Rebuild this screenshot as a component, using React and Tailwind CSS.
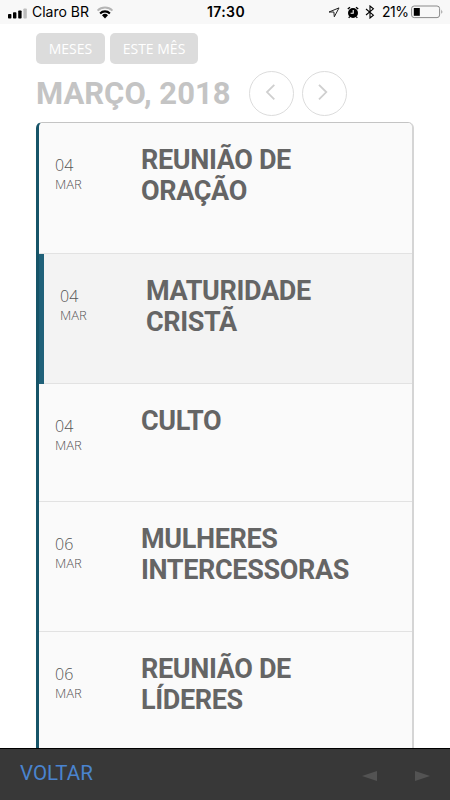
import React from 'react';

const events = [
  { day: '04', month: 'MAR', lines: ['REUNIÃO DE', 'ORAÇÃO'], height: 'h-[131px]' },
  { day: '04', month: 'MAR', lines: ['MATURIDADE', 'CRISTÃ'], height: 'h-[130px]', active: true },
  { day: '04', month: 'MAR', lines: ['CULTO'], height: 'h-[118px]' },
  { day: '06', month: 'MAR', lines: ['MULHERES', 'INTERCESSORAS'], height: 'h-[130px]' },
  { day: '06', month: 'MAR', lines: ['REUNIÃO DE', 'LÍDERES'], height: 'h-[131px]' },
];

function StatusBar() {
  return (
    <div className="h-6 shrink-0 bg-[#f8f8f8] pl-[8px] pr-[6px] grid grid-cols-[1fr_auto_1fr] items-center text-black font-['Inter',sans-serif] text-[14px] leading-6">
      <div className="flex items-center">
        <svg width="20" height="11" viewBox="0 0 20 11" className="mt-0.5">
          <rect x="0" y="6" width="3.4" height="4.5" rx="0.8" fill="#000" />
          <rect x="5" y="4.2" width="3.4" height="6.3" rx="0.8" fill="#000" />
          <rect x="10.2" y="2.4" width="3.4" height="8.1" rx="0.8" fill="#000" />
          <rect x="15.4" y="0.4" width="3.4" height="10.1" rx="0.8" fill="#bdbdbd" />
        </svg>
        <span className="ml-[4px] w-[58px] whitespace-nowrap">Claro BR</span>
        <svg width="18" height="13" viewBox="0 0 18 13" className="ml-[6px]" fill="none">
          <path d="M1.6 4.6a10.6 10.6 0 0 1 14.8 0" stroke="#b5b5b5" strokeWidth="2" />
          <path d="M4.1 7.4a7 7 0 0 1 9.8 0" stroke="#000" strokeWidth="2.1" />
          <path d="M6 9.3a4.3 4.3 0 0 1 6 0L9 12.4z" fill="#000" />
        </svg>
      </div>
      <span className="font-semibold tracking-[0.4px]">17:30</span>
      <div className="flex items-center justify-end">
        <svg width="12" height="11" viewBox="0 0 12 11" className="mr-[7px]" fill="none">
          <path d="M11 0.9L1 5h4.9L6.3 9.8z" stroke="#222" strokeWidth="1" strokeLinejoin="round" />
        </svg>
        <svg width="12" height="13" viewBox="0 0 12 13" className="mr-[6px]" fill="none">
          <path d="M0.8 3L3 1.2M11.2 3L9 1.2" stroke="#000" strokeWidth="1.4" />
          <circle cx="6" cy="7" r="5" fill="#000" />
          <path d="M6.2 4v3.2H3.6" stroke="#fff" strokeWidth="1.1" />
          <path d="M2.7 10.6l-1 1.3M9.3 10.6l1 1.3" stroke="#000" strokeWidth="1.2" />
        </svg>
        <svg width="10" height="14" viewBox="0 0 10 14" className="mr-[7px]" fill="none">
          <path d="M1 4l7.4 6.2L5 13V1l3.4 2.8L1 10" stroke="#000" strokeWidth="1.1" />
        </svg>
        <span className="w-[26px] whitespace-nowrap tracking-[-0.5px]">21%</span>
        <svg width="33" height="14" viewBox="0 0 33 14" className="ml-[3px]" fill="none">
          <rect x="0.6" y="1" width="28" height="11.6" rx="2.6" stroke="#8a8a8a" />
          <rect x="2.8" y="3" width="6" height="7.8" fill="#000" />
          <path d="M30.4 4.6q1.8 2.2 0 4.4z" fill="#8a8a8a" />
        </svg>
      </div>
    </div>
  );
}

function ArrowButton({ direction }) {
  return (
    <button className="w-[45px] h-[45px] rounded-full border border-[#dcdcdc] flex items-center justify-center">
      <svg width="45" height="45" viewBox="0 0 45 45" fill="none" stroke="#cfcfcf" strokeWidth="1.8" className="shrink-0">
        {direction === 'left' ? <path d="M25.3 13.8L18 21.1l7.3 7.3" /> : <path d="M17 13.8l7.3 7.3L17 28.4" />}
      </svg>
    </button>
  );
}

function EventRow({ event }) {
  return (
    <div className={`${event.height} shrink-0 flex border-b border-[#e2e2e2] ${event.active ? 'bg-[#f3f3f3]' : 'bg-[#fafafa]'}`}>
      {event.active && <div className="w-[5px] -mb-px bg-[#206179]" />}
      <div className="w-[86px] ml-4 pt-[32px] shrink-0 font-light text-[#555] font-['Open_Sans',sans-serif]">
        <div className="text-[16px] leading-5">{event.day}</div>
        <div className="text-[13px] leading-[18px]">{event.month}</div>
      </div>
      <div className="pt-[22px] font-bold text-[27px] tracking-[-0.35px] leading-[31px] text-[#656565] font-['Roboto',sans-serif] whitespace-nowrap">
        {event.lines.map(line => (
          <div key={line}>{line}</div>
        ))}
      </div>
    </div>
  );
}

export default function App() {
  return (
    <div className="w-[450px] h-[800px] bg-white flex flex-col overflow-hidden">
      <StatusBar />

      <div className="flex-1 min-h-0 flex flex-col px-9 overflow-hidden">
        {/* Filters */}
        <div className="mt-[9px] flex gap-[5px] text-white text-[14px] leading-[31px] font-['Open_Sans',sans-serif]">
          <button className="w-[69px] h-[31px] rounded-[5px] bg-[#dcdcdc]">MESES</button>
          <button className="w-[88px] h-[31px] rounded-[5px] bg-[#dcdcdc] whitespace-nowrap">ESTE MÊS</button>
        </div>

        {/* Current month */}
        <div className="mt-[7px] h-[45px] flex items-center">
          <h1 className="w-[213px] font-bold text-[31px] leading-[45px] text-[#c4c4c4] font-['Roboto',sans-serif] whitespace-nowrap">MARÇO, 2018</h1>
          <div className="flex gap-2">
            <ArrowButton direction="left" />
            <ArrowButton direction="right" />
          </div>
        </div>

        {/* Event list */}
        <div className="mt-[6px] w-[378px] flex-1 min-h-0 flex flex-col overflow-hidden rounded-t-[6px] border-t border-r-2 border-l-[3px] border-t-[#c4c4c4] border-r-[#d5d5d5] border-l-[#165468]">
          {events.map((event, i) => (
            <EventRow key={i} event={event} />
          ))}
        </div>
      </div>

      <div className="h-[52px] shrink-0 bg-[#383838] border-t border-black flex items-center justify-between pl-5 pr-5">
        <button className="mb-[2px] text-[20.5px] text-[#4a84cf] font-['Roboto',sans-serif]">VOLTAR</button>
        <div className="flex gap-[37px] mt-[2px]">
          <svg width="16" height="10" viewBox="0 0 16 10"><path d="M1 5L16 0v10z" fill="#535353" /></svg>
          <svg width="16" height="10" viewBox="0 0 16 10"><path d="M16 5L1 0v10z" fill="#535353" /></svg>
        </div>
      </div>
    </div>
  );
}
